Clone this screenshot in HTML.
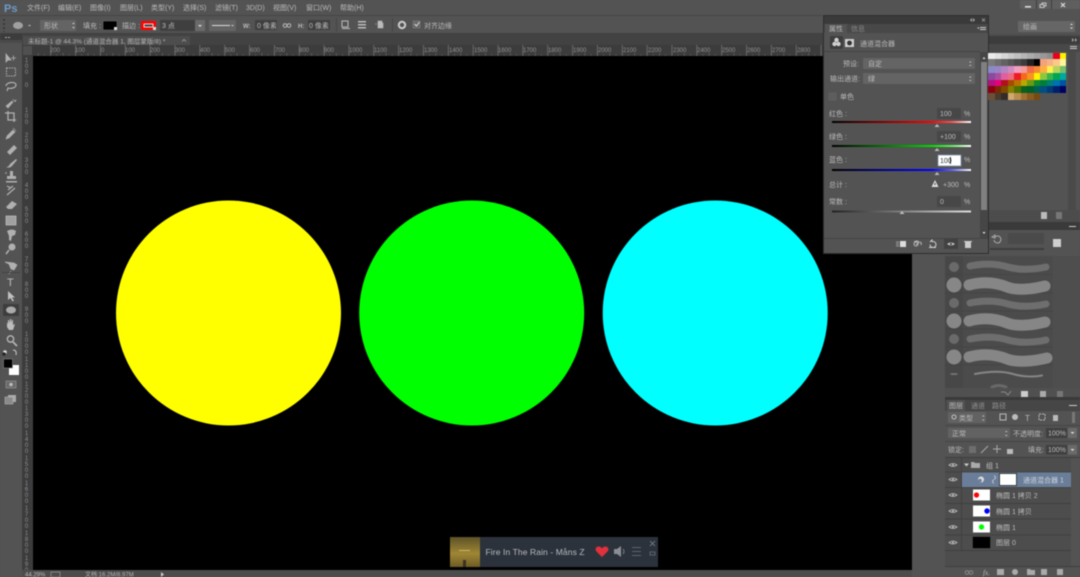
<!DOCTYPE html>
<html><head><meta charset="utf-8"><style>
html,body{margin:0;padding:0;width:1080px;height:577px;overflow:hidden;background:#535353}
#w{position:absolute;left:0;top:0;width:1080px;height:577px;overflow:hidden;filter:blur(.5px);font-family:"Liberation Sans","Noto Sans CJK SC",sans-serif}
svg{position:absolute;left:0;top:0}
text{font-family:"Liberation Sans","Noto Sans CJK SC",sans-serif;font-size:7px;fill:#bcbcbc}
.r text,text.r{font-size:6px;fill:#929292}
.v{position:absolute;left:24px;width:5px;word-break:break-all;line-height:6px;font-size:6px;color:#8a8f99;text-align:center}
#vr{position:absolute;left:22px;top:56px;width:11px;height:514px;background:#3c3c3c;overflow:hidden}
#vr .v{left:2px}
#sw{position:absolute;left:988px;top:52.500px;width:80px;display:grid;grid-template-columns:repeat(12,6.5px);grid-auto-rows:6.8px}
#sw i{display:block}
</style></head><body><div id="w">
<svg width="1080" height="577" viewBox="0 0 1080 577">
<defs>
<pattern id="ht" x="100" y="45" width="24.85" height="11" patternUnits="userSpaceOnUse">
<rect x="0" y="0" width=".8" height="11" fill="#747474"/>
<rect x="6.2" y="9" width=".7" height="2" fill="#5c5c5c"/><rect x="12.4" y="8" width=".7" height="3" fill="#666"/><rect x="18.6" y="9" width=".7" height="2" fill="#5c5c5c"/>
</pattern>
<linearGradient id="gr" x1="0" x2="1"><stop offset="0" stop-color="#000"/><stop offset=".72" stop-color="#f00"/><stop offset=".86" stop-color="#ff5050"/><stop offset="1" stop-color="#fff"/></linearGradient>
<linearGradient id="gg" x1="0" x2="1"><stop offset="0" stop-color="#000"/><stop offset=".72" stop-color="#0d0"/><stop offset=".86" stop-color="#60f060"/><stop offset="1" stop-color="#fff"/></linearGradient>
<linearGradient id="gb" x1="0" x2="1"><stop offset="0" stop-color="#000"/><stop offset=".72" stop-color="#00f"/><stop offset=".86" stop-color="#6060ff"/><stop offset="1" stop-color="#fff"/></linearGradient>
<linearGradient id="gs" x1="0" x2="1"><stop offset="0" stop-color="#222"/><stop offset="1" stop-color="#ddd"/></linearGradient>
<linearGradient id="al" x1="0" x2="0" y1="0" y2="1"><stop offset="0" stop-color="#5d5228"/><stop offset=".55" stop-color="#a08634"/><stop offset="1" stop-color="#6d5c26"/></linearGradient>
</defs>
<!-- base -->
<rect width="1080" height="577" fill="#535353"/>
<rect y="15" width="822" height="1" fill="#464646"/>
<rect y="33" width="824" height="1" fill="#404040"/>
<rect y="34" width="1080" height="11" fill="#424242"/>
<!-- menu -->
<text x="27" y="10">文件(F)</text><text x="58" y="10">编辑(E)</text><text x="90" y="10">图像(I)</text><text x="120" y="10">图层(L)</text><text x="151" y="10">类型(Y)</text><text x="183" y="10">选择(S)</text><text x="215" y="10">滤镜(T)</text><text x="246" y="10">3D(D)</text><text x="273" y="10">视图(V)</text><text x="306" y="10">窗口(W)</text><text x="340" y="10">帮助(H)</text>
<text x="4" y="12" style="font-size:11px;font-weight:bold;fill:#6d9cc8">Ps</text>
<!-- options -->
<g fill="#3a3a3a"><rect x="3" y="19" width="2" height="2"/><rect x="3" y="23" width="2" height="2"/><rect x="3" y="27" width="2" height="2"/><rect x="3" y="31" width="2" height="1"/></g>
<ellipse cx="18" cy="25.5" rx="5" ry="3.6" fill="#a0a0a0"/><path d="M28 25h3l-1.500 1.500z" fill="#c0c0c0"/>
<rect x="40" y="20" width="36" height="11" rx="1" fill="#646464"/><text x="44" y="28">形状</text><path d="M72 24l1.500-1.500 1.500 1.500zM72 27l1.500 1.500 1.500-1.500z" fill="#ccc"/>
<text x="83" y="28">填充 :</text>
<rect x="103" y="21" width="14" height="9" fill="#000" stroke="#777" stroke-width=".5"/><rect x="114" y="27" width="3" height="3" fill="#ddd"/>
<text x="122" y="28">描边 :</text>
<rect x="141" y="21" width="15" height="9" fill="#f00"/><rect x="144" y="24" width="9" height="3" fill="#444" stroke="#fff" stroke-width=".8"/><rect x="153" y="27" width="3" height="3" fill="#ddd"/>
<rect x="160" y="20" width="35" height="11" fill="#3f3f3f"/><text x="162" y="28">3 点</text>
<rect x="195" y="20" width="10" height="11" fill="#6a6a6a"/><path d="M198 25h4l-2 2z" fill="#ddd"/>
<rect x="209" y="20" width="27" height="11" rx="1" fill="#646464"/><rect x="212" y="25" width="18" height="1" fill="#ddd"/><path d="M231 25h3l-1.500 1.500z" fill="#ccc"/>
<text x="243" y="28" style="font-size:6px;font-weight:bold">W:</text><rect x="255" y="20" width="22" height="10" fill="#3f3f3f"/><text x="257" y="28">0 像素</text>
<g fill="none" stroke="#bbb" stroke-width="1"><circle cx="285" cy="25.500" r="1.800"/><circle cx="289" cy="25.500" r="1.800"/></g>
<text x="298" y="28" style="font-size:6px;font-weight:bold">H:</text><rect x="308" y="20" width="22" height="10" fill="#3f3f3f"/><text x="309" y="28">0 像素</text>
<rect x="336" y="18" width="1" height="14" fill="#464646"/>
<rect x="342" y="21" width="6" height="6" fill="none" stroke="#bbb"/><rect x="342" y="28" width="8" height="1" fill="#bbb"/>
<g fill="#bbb"><rect x="358" y="21" width="8" height="1.500"/><rect x="358" y="24" width="8" height="1.500"/><rect x="358" y="27" width="8" height="1.500"/></g>
<path d="M375 24h2M378 21h4v2h1v5h-5z" fill="#bbb" stroke="#bbb" stroke-width=".6"/>
<rect x="392" y="18" width="1" height="14" fill="#464646"/>
<circle cx="402" cy="25" r="3.200" fill="none" stroke="#ccc" stroke-width="2"/>
<rect x="413" y="21" width="7" height="7" fill="#666" stroke="#888" stroke-width=".5"/><path d="M414.500 24l2 2 3-4" fill="none" stroke="#ddd"/>
<text x="424" y="28">对齐边缘</text>
<!-- window buttons -->
<path d="M1020 0h60v9h-58q-2 0-2-2z" fill="#5f5f5f"/><rect x="1036" y="0" width="1" height="9" fill="#3e3e3e"/><rect x="1051" y="0" width="1" height="9" fill="#3e3e3e"/>
<rect x="1025" y="6" width="6" height="1.600" fill="#ddd"/><rect x="1042" y="3" width="4" height="3" fill="none" stroke="#ddd" stroke-width=".8"/><rect x="1040" y="4.500" width="4" height="3" fill="#666" stroke="#ddd" stroke-width=".8"/>
<path d="M1061 3l4 4M1065 3l-4 4" stroke="#ddd" stroke-width="1.200"/>
<!-- tab bar and ruler -->
<path d="M23 36h167v9h-167z" fill="#4d4d4d"/>
<text x="28" y="43.500" style="font-size:6.500px;fill:#b4b4b4">未标题-1 @ 44.3% (通道混合器 1, 图层蒙版/8) *</text><path d="M182 41.500l2-2 2 2" fill="none" stroke="#aaa" stroke-width=".7"/>
<rect x="0" y="34" width="22" height="6" fill="#3c3c3c"/><path d="M5 37.500h2M8 37.500h2" stroke="#aaa" stroke-width="1"/>
<rect x="22" y="45" width="890" height="11" fill="#3c3c3c"/>
<rect x="33" y="45" width="879" height="11" fill="url(#ht)"/>
<rect x="23" y="46" width="9" height="9" fill="#505050"/>
<g class="r">
<text x="50" y="52">200</text><text x="75" y="52">100</text><text x="101" y="52">0</text><text x="125" y="52">100</text><text x="150" y="52">200</text><text x="175" y="52">300</text><text x="200" y="52">400</text><text x="225" y="52">500</text><text x="250" y="52">600</text><text x="275" y="52">700</text><text x="299" y="52">800</text><text x="324" y="52">900</text><text x="349" y="52">1000</text><text x="374" y="52">1100</text><text x="399" y="52">1200</text><text x="424" y="52">1300</text><text x="449" y="52">1400</text><text x="474" y="52">1500</text><text x="498" y="52">1600</text><text x="523" y="52">1700</text><text x="548" y="52">1800</text><text x="573" y="52">1900</text><text x="598" y="52">2000</text><text x="623" y="52">2100</text><text x="648" y="52">2200</text><text x="673" y="52">2300</text><text x="697" y="52">2400</text><text x="722" y="52">2500</text><text x="747" y="52">2600</text><text x="772" y="52">2700</text><text x="797" y="52">2800</text>
</g>
<!-- canvas -->
<rect x="33" y="56" width="879" height="514" fill="#000"/>
<circle cx="228.500" cy="313" r="112.500" fill="#ff0"/>
<circle cx="471.700" cy="313" r="112.500" fill="#0f0"/>
<circle cx="715.200" cy="313" r="112.500" fill="#0ff"/>
<!-- toolbox -->
<rect x="0" y="40" width="22" height="537" fill="#535353"/>
<rect x="0" y="40" width="22" height="3" fill="#4a4a4a"/>
<g fill="#b0b0b0" stroke="none">
<path d="M6 54v8l2-2 3 0zM11 58h5M13.500 55.500v5" stroke="#b0b0b0" stroke-width=".8"/>
<rect x="6.500" y="68" width="9" height="8" fill="none" stroke="#b0b0b0" stroke-dasharray="1.500 1"/>
<path d="M6 86c0-4 10-5 10-1 0 3-6 4-8 3l-1 3" fill="none" stroke="#b0b0b0" stroke-width="1.200"/>
<path d="M6 106l6-5 1 1-5 6zM13 99l1 2 2-1-1 2" stroke="#b0b0b0" stroke-width=".6"/>
<path d="M8 111v9h8M5 113h9v9" fill="none" stroke="#b0b0b0" stroke-width="1.300"/>
<path d="M7 136l6-6 2 2-6 6-3 1zM13 128l3 3" stroke="#b0b0b0" stroke-width=".6"/>
<path d="M7 152l7-7 3 3-7 7z"/>
<path d="M6 167c2 0 3-1 4-3l6-5 1 1-5 6c-2 2-4 2-6 1z"/>
<path d="M10 171h3v5h3v3H7v-3h3zM6 181h11v1.500H6z"/><path d="M5 173h2M6 172v2" stroke="#b0b0b0" stroke-width=".6"/>
<path d="M7 195l8-7M8 190l5-4M7 186l4 2" stroke="#b0b0b0" stroke-width="1.200" fill="none"/>
<path d="M6 207l6-6 5 3-5 5h-4z"/>
<rect x="6" y="216" width="10" height="9" fill="#a0a0a0" stroke="#c0c0c0" stroke-width=".7"/>
<path d="M7 231q5-3 9 0l-1 4-3 1-1 5-2-1 0-4z"/>
<circle cx="12" cy="247" r="3.500"/><path d="M9 250l-3 4" stroke="#b0b0b0" stroke-width="1.500"/>
<path d="M5 262l9 1 3 2-3 5-3-1-2-5zM11 271l-2 3" stroke="#b0b0b0" stroke-width=".7"/>
<rect x="2" y="272" width="18" height="1" fill="#444"/>
</g>
<text x="7" y="286" style="font-size:11px;fill:#bcbcbc">T</text>
<path d="M8 291v9l2.500-2 2 3.500 1.500-1-2-3h3z" fill="#c0c0c0"/>
<rect x="3" y="304" width="16" height="12" rx="1" fill="#3d3d3d"/><ellipse cx="11" cy="310" rx="5" ry="3.500" fill="#aaa"/>
<path d="M7 327v-5l1 2v-4h1l1 3v-4h1l1 4v-3h1v5l2-1-2 6H9z" fill="#bcbcbc"/>
<circle cx="10.500" cy="339" r="3.200" fill="none" stroke="#b8b8b8" stroke-width="1.300"/><path d="M13 342l4 4" stroke="#b8b8b8" stroke-width="1.600"/>
<circle cx="5" cy="352" r="1.800" fill="#ddd"/><rect x="2.500" y="352.500" width="3" height="3" fill="#222"/><path d="M13 350q4 0 3 5" fill="none" stroke="#ccc"/>
<rect x="9" y="365" width="10" height="10" fill="#fff"/>
<rect x="3.500" y="359" width="9" height="9" fill="#000" stroke="#888" stroke-width=".6"/>
<rect x="6" y="381" width="10" height="7" fill="#6a6a6a" stroke="#999" stroke-width=".6"/><circle cx="11" cy="384.500" r="1.800" fill="#bbb"/>
<rect x="8" y="395" width="8" height="7" fill="#aaa"/><rect x="5" y="397" width="8" height="7" fill="#8a8a8a" stroke="#bbb" stroke-width=".5"/>
<!-- status bar -->
<rect x="22" y="570" width="890" height="7" fill="#4c4c4c"/>
<text x="25" y="576.500" style="font-size:6px">44.29%</text><rect x="51" y="572" width="9" height="5" fill="none" stroke="#999" stroke-width=".7"/>
<text x="85" y="576.500" style="font-size:6px;fill:#b4b4b4">文档:16.2M/8.97M</text><path d="M161 572l3 2.500-3 2.500z" fill="#ccc"/>
<!-- right background -->
<rect x="912" y="16" width="168" height="561" fill="#4c4c4c"/>
<rect x="912" y="16" width="168" height="18" fill="#535353"/>
<rect x="1018" y="21" width="57" height="11" rx="1" fill="#666"/><text x="1023" y="29">绘画</text><path d="M1070 25l1.500-1.500 1.500 1.500zM1070 27.500l1.500 1.500 1.500-1.500z" fill="#ddd"/>
<rect x="912" y="34" width="33" height="543" fill="#535353"/>
<rect x="988" y="36" width="92" height="8" fill="#3c3c3c"/><rect x="988" y="44" width="92" height="8" fill="#484848"/>
<path d="M1072 38l2 2-2 2zM1075 38l2 2-2 2z" fill="#aaa"/><rect x="1070" y="46" width="7" height="1" fill="#ccc"/><rect x="1070" y="48" width="7" height="1" fill="#ccc"/>
<rect x="988" y="52" width="92" height="158" fill="#535353"/>
<rect x="1068" y="52" width="8" height="158" fill="#4a4a4a"/>
<rect x="988" y="210" width="92" height="12" fill="#4c4c4c"/>
<rect x="1041" y="212" width="6" height="7" fill="#bbb"/><rect x="1056" y="212" width="6" height="7" fill="#777"/>
<rect x="945" y="222" width="135" height="8" fill="#3a3a3a"/><rect x="1069" y="226" width="7" height="1" fill="#ccc"/>
<rect x="945" y="230" width="135" height="27" fill="#535353"/>
<rect x="1008" y="233" width="36" height="11" fill="#4a4a4a"/><rect x="990" y="248" width="54" height="2" fill="#3e3e3e"/>
<rect x="1053" y="239" width="8" height="8" fill="#d0d0d0"/>
<path d="M995 237a3.500 3.500 0 1 1-1 3M992 237l3-2v3z" fill="none" stroke="#aaa"/>
<!-- brushes -->
<rect x="945" y="256" width="108" height="133" fill="#4b4b4b"/><rect x="945" y="256" width="18" height="133" fill="#474747"/>
<rect x="1053" y="256" width="27" height="133" fill="#4e4e4e"/>
<g stroke="#424242" stroke-width=".6"><path d="M945 274.500h108M945 293h108M945 311h108M945 329h108M945 347h108M945 365h108"/></g>
<g fill="#878787">
<circle cx="954" cy="267" r="5" opacity=".55"/><circle cx="954" cy="285" r="7.500"/><circle cx="954" cy="303" r="5" opacity=".55"/><circle cx="954" cy="321" r="7.500"/><circle cx="954" cy="339" r="5" opacity=".55"/><circle cx="954" cy="357" r="7.500"/><ellipse cx="954" cy="374" rx="4" ry="1" opacity=".7"/>
</g>
<g fill="none" stroke="#868686" stroke-linecap="round">
<path d="M970 266c15-3 28-2 38 1s24 3 38 0" stroke-width="7" opacity=".6"/>
<path d="M969 285c15-4 28-2 38 2s26 2 38-1" stroke-width="11"/>
<path d="M970 303c15-3 28-2 38 1s24 3 38 0" stroke-width="7" opacity=".6"/>
<path d="M969 321c15-4 28-2 38 2s26 2 38-1" stroke-width="11"/>
<path d="M970 339c15-3 28-2 38 1s24 3 38 0" stroke-width="7" opacity=".6"/>
<path d="M969 357c15-4 28-2 38 2s28 2 40-1" stroke-width="11"/>
<path d="M975 374c15-3 28-3 38 0s22 3 29 1.500" stroke-width="2"/>
<path d="M992 387c5-2 8-2 14 0" stroke-width="3" opacity=".5"/>
</g>
<rect x="945" y="388" width="135" height="9" fill="#505050"/>
<path d="M1005 392l3 3 3-4M1001 392h4" fill="none" stroke="#888"/><rect x="1021" y="391" width="7" height="6" fill="#ccc"/><rect x="1040" y="391" width="6" height="6" fill="#aaa"/><rect x="1057" y="391" width="6" height="6" fill="#777"/>
<!-- layers -->
<rect x="945" y="397" width="135" height="3" fill="#3a3a3a"/>
<rect x="945" y="400" width="135" height="11" fill="#464646"/><rect x="947" y="400" width="18" height="11" fill="#535353"/>
<text x="949" y="408">图层</text><text x="971" y="408" style="fill:#929292">通道</text><text x="992" y="408" style="fill:#929292">路径</text>
<rect x="1069" y="405" width="8" height="1" fill="#ccc"/>
<rect x="945" y="411" width="135" height="166" fill="#535353"/>
<rect x="948" y="412" width="38" height="11" rx="1" fill="#626262"/><circle cx="954" cy="417" r="2" fill="none" stroke="#ddd" stroke-width=".8"/><text x="959" y="420.500">类型</text><path d="M982 416.500l1.300-1.300 1.300 1.300zM982 419.500l1.300 1.300 1.300-1.300z" fill="#ccc"/>
<rect x="1000" y="414" width="6" height="6" fill="none" stroke="#bbb"/><circle cx="1015" cy="417" r="3" fill="#bbb"/><text x="1025" y="421" style="font-size:8px">T</text><rect x="1039" y="414" width="6" height="6" fill="none" stroke="#bbb" stroke-dasharray="2 1"/><rect x="1053" y="415" width="5" height="6" fill="#bbb"/>
<rect x="1072" y="412" width="3" height="11" fill="#777"/>
<rect x="945" y="425" width="135" height="1" fill="#464646"/>
<rect x="948" y="428" width="62" height="10" rx="1" fill="#626262"/><text x="952" y="436">正常</text><path d="M1005 432l1.300-1.300 1.300 1.300zM1005 435l1.300 1.300 1.300-1.300z" fill="#ccc"/>
<text x="1013" y="436">不透明度:</text><rect x="1046" y="428" width="21" height="10" fill="#3f3f3f"/><text x="1048" y="435.500">100%</text><rect x="1068" y="428" width="9" height="10" fill="#6a6a6a"/><path d="M1070.500 432h4l-2 2z" fill="#ddd"/>
<rect x="945" y="441" width="135" height="1" fill="#464646"/>
<text x="948" y="452">锁定:</text><rect x="969" y="446" width="7" height="7" fill="#6e6e6e"/><path d="M981 453l7-7" stroke="#aaa"/><path d="M997 445v8M993 449h8" stroke="#aaa"/><rect x="1007" y="449" width="6" height="5" fill="#bbb"/>
<text x="1028" y="452">填充:</text><rect x="1046" y="445" width="21" height="9.500" fill="#3f3f3f"/><text x="1048" y="452">100%</text><rect x="1068" y="445" width="9" height="9.500" fill="#6a6a6a"/><path d="M1070.500 449h4l-2 2z" fill="#ddd"/>
<rect x="945" y="457" width="135" height="1" fill="#3e3e3e"/>
<rect x="945" y="458" width="126" height="108" fill="#4d4d4d"/>
<rect x="1071" y="458" width="9" height="108" fill="#535353"/>
<rect x="962" y="472" width="109" height="15.500" fill="#6a7e99"/>
<g stroke="#3d3d3d" stroke-width=".7"><path d="M945 472h126M945 487.500h126M945 503.500h126M945 519h126M945 535h126M945 550.500h126M961.500 458v93"/></g>
<g fill="none" stroke="#bdbdbd" stroke-width=".8">
<path d="M949 465q4-3 8 0q-4 3-8 0zM949 479.500q4-3 8 0q-4 3-8 0zM949 495q4-3 8 0q-4 3-8 0zM949 511q4-3 8 0q-4 3-8 0zM949 527q4-3 8 0q-4 3-8 0zM949 542.500q4-3 8 0q-4 3-8 0z"/>
</g>
<g fill="#bdbdbd"><circle cx="953" cy="465" r="1"/><circle cx="953" cy="479.500" r="1"/><circle cx="953" cy="495" r="1"/><circle cx="953" cy="511" r="1"/><circle cx="953" cy="527" r="1"/><circle cx="953" cy="542.500" r="1"/></g>
<path d="M964 463.500h5l-2.500 3z" fill="#ccc"/><path d="M971 462h3l1 1h5v5h-9z" fill="#aaa"/><text x="986" y="468" style="fill:#c0c0c0">组 1</text>
<circle cx="981" cy="479.500" r="3" fill="#ddd"/><circle cx="980" cy="480.500" r="1.800" fill="#6a7e99"/>
<path d="M994 476a1.500 1.500 0 0 1 0 3M994 480a1.500 1.500 0 0 0 0 3" fill="none" stroke="#d8d8d8" stroke-width=".7"/>
<rect x="999.500" y="473.500" width="17" height="12" fill="#fff" stroke="#222" stroke-width=".8"/>
<text x="1023" y="482.500" style="fill:#d0d4dc">通道混合器 1</text>
<rect x="973" y="489.500" width="17" height="11" fill="#fff"/><circle cx="976.500" cy="495" r="2.600" fill="#f00"/>
<text x="996" y="498">椭圆 1 拷贝 2</text>
<rect x="973" y="505.500" width="17" height="11" fill="#fff"/><circle cx="987" cy="511" r="2.700" fill="#00f"/>
<text x="996" y="514">椭圆 1 拷贝</text>
<rect x="973" y="521.500" width="17" height="11" fill="#fff"/><circle cx="981.500" cy="527" r="2.700" fill="#0f0"/>
<text x="996" y="530">椭圆 1</text>
<rect x="972.500" y="536.500" width="18" height="12" fill="#000" stroke="#555" stroke-width=".5"/>
<text x="996" y="545">图层 0</text>
<rect x="945" y="566" width="135" height="1" fill="#3e3e3e"/>
<g fill="#aaa"><circle cx="967" cy="572.500" r="1.800" fill="none" stroke="#888"/><circle cx="971" cy="572.500" r="1.800" fill="none" stroke="#888"/>
<text x="983" y="575" style="font-size:7px;font-style:italic;font-family:'Liberation Serif',serif">fx.</text>
<rect x="997" y="569" width="7" height="6"/><circle cx="1015" cy="572" r="3"/><path d="M1027 569h3l1 1h4v5h-8z"/><rect x="1041" y="569" width="6" height="6"/><rect x="1057" y="569" width="6" height="6"/></g>
<!-- properties panel -->
<rect x="823.500" y="15.500" width="165" height="238" fill="#535353" stroke="#2e2e2e"/>
<rect x="824" y="16" width="164" height="8" fill="#3a3a3a"/>
<path d="M972 18l-2 2 2 2zM973 18l2 2-2 2z" fill="#aaa"/><path d="M982 18.500l3 3M985 18.500l-3 3" stroke="#aaa" stroke-width=".7"/>
<rect x="824" y="24" width="164" height="9" fill="#484848"/><rect x="825" y="24" width="22" height="9" fill="#535353"/>
<text x="829" y="31">属性</text><text x="851" y="31" style="fill:#8a8a8a">信息</text>
<rect x="980" y="27" width="6" height="1" fill="#ccc"/><rect x="980" y="29" width="6" height="1" fill="#ccc"/><path d="M977 28l2-1v2z" fill="#ccc"/>
<rect x="830" y="36" width="13" height="13" rx="2" fill="#3d3d3d"/>
<circle cx="836.500" cy="40" r="2.200" fill="#d0d0d0"/><circle cx="834.500" cy="44" r="2.200" fill="#d0d0d0"/><circle cx="838.500" cy="44" r="2.200" fill="#d0d0d0"/>
<rect x="845" y="39" width="9" height="8" fill="#d0d0d0"/><circle cx="849.500" cy="43" r="2.400" fill="#333"/>
<text x="860" y="46">通道混合器</text>
<rect x="824" y="51" width="156" height="1" fill="#434343"/>
<text x="843" y="66" style="font-size:7px">预设:</text><rect x="863" y="58" width="112" height="11" rx="1" fill="#646464"/><text x="868" y="66">自定</text><path d="M969 62.500l1.300-1.300 1.300 1.300zM969 65l1.300 1.300 1.300-1.300z" fill="#ccc"/>
<text x="830" y="81" style="font-size:7px">输出通道:</text><rect x="863" y="73" width="112" height="11" rx="1" fill="#646464"/><text x="868" y="81">绿</text><path d="M969 77.500l1.300-1.300 1.300 1.300zM969 80l1.300 1.300 1.300-1.300z" fill="#ccc"/>
<rect x="829" y="93" width="7" height="7" fill="#5d5d5d" stroke="#6a6a6a" stroke-width=".5"/><text x="840" y="99">单色</text>
<text x="829" y="116">红色 :</text><rect x="937" y="108" width="24" height="11" fill="#474747"/><text x="940" y="116">100</text><text x="964" y="116">%</text>
<rect x="832" y="121" width="139" height="2" fill="url(#gr)"/><path d="M937 124l2.500 3h-5z" fill="#bbb"/>
<text x="829" y="139">绿色 :</text><rect x="937" y="131" width="24" height="11" fill="#474747"/><text x="940" y="139">+100</text><text x="964" y="139">%</text>
<rect x="832" y="145" width="139" height="2" fill="url(#gg)"/><path d="M937 148l2.500 3h-5z" fill="#bbb"/>
<text x="829" y="162">蓝色 :</text><rect x="938" y="155" width="23" height="11" fill="#fff" stroke="#7a8fb0" stroke-width=".8"/><text x="940" y="163" style="fill:#333">100</text><rect x="950" y="157" width=".8" height="7" fill="#000"/><text x="964" y="162">%</text>
<rect x="832" y="169" width="139" height="2" fill="url(#gb)"/><path d="M937 172l2.500 3h-5z" fill="#bbb"/>
<text x="829" y="187">总计 :</text><path d="M935 180l-3.500 7h7z" fill="#ddd"/><rect x="934.500" y="183" width="1" height="2" fill="#444"/><text x="943" y="187">+300</text><text x="964" y="187">%</text>
<text x="829" y="204">常数 :</text><rect x="937" y="196" width="24" height="11" fill="#474747"/><text x="940" y="204">0</text><text x="964" y="204">%</text>
<rect x="832" y="210.500" width="139" height="2" fill="url(#gs)"/><path d="M902 211l2.500 3h-5z" fill="#bbb"/>
<rect x="980" y="52" width="8" height="186" fill="#464646"/><rect x="981" y="62" width="6" height="148" fill="#808080"/><path d="M982.500 59l1.500-2 1.500 2z" fill="#ddd"/><path d="M982.500 232l1.500 2 1.500-2z" fill="#ddd"/>
<rect x="824" y="238" width="164" height="1" fill="#434343"/>
<rect x="944" y="238" width="14" height="11" fill="#424242"/>
<rect x="900" y="241" width="6" height="6" fill="#ddd"/><path d="M896 242h3M896 244h3M896 246h3" stroke="#bbb" stroke-width=".7"/>
<path d="M914 242q3-2 5 0q-1 3-3 2M920 242q2 1 1 3" fill="none" stroke="#bbb"/><circle cx="916" cy="244" r="2" fill="none" stroke="#bbb"/>
<path d="M930 242l2-2v1.500h1a3 3 0 1 1-3 3" fill="none" stroke="#ccc"/><rect x="929" y="247" width="7" height="1" fill="#ccc"/>
<path d="M947 244q4-3 8 0q-4 3-8 0z" fill="#ccc"/><circle cx="951" cy="244" r="1" fill="#333"/>
<rect x="965" y="242" width="6" height="6" fill="#ccc"/><rect x="964" y="241" width="8" height="1" fill="#ccc"/>
<!-- music -->
<rect x="450" y="537" width="208" height="30" fill="#2c323b"/>
<rect x="450" y="537" width="30" height="30" fill="url(#al)"/>
<rect x="463" y="560" width="3" height="7" fill="#3a3220"/><rect x="459" y="550" width="11" height="1" fill="#c8b870"/>
<text x="485.500" y="555" style="font-size:8.500px;fill:#b8bcc2;letter-spacing:.1px">Fire In The Rain - Måns Z</text>
<rect x="586" y="540" width="6" height="24" fill="#2c323b"/>
<path d="M602 557l-5.500-5.500c-2-2-.5-5 2-5 1.500 0 2.700.8 3.500 2 .8-1.200 2-2 3.500-2 2.500 0 4 3 2 5z" fill="#e0313c"/>
<path d="M614 549h3l4-3v11l-4-3h-3z" fill="#8a8f95"/><path d="M623 549q2 2.500 0 5" fill="none" stroke="#7a7f85"/>
<g fill="#5d636b"><rect x="632" y="547" width="9" height="1"/><rect x="632" y="551" width="9" height="1"/><rect x="632" y="555" width="9" height="1"/></g>
<path d="M650 541l5 5M655 541l-5 5" stroke="#7e848c" stroke-width=".8"/><rect x="650" y="552" width="5" height="3" fill="none" stroke="#6f757d" stroke-width=".7"/>
</svg>
<div id="vr">
<div class="v" style="top:2px">100</div><div class="v" style="top:27px">0</div><div class="v" style="top:52px">100</div><div class="v" style="top:77px">200</div><div class="v" style="top:102px">300</div><div class="v" style="top:127px">400</div><div class="v" style="top:151px">500</div><div class="v" style="top:176px">600</div><div class="v" style="top:201px">700</div><div class="v" style="top:226px">800</div><div class="v" style="top:251px">900</div><div class="v" style="top:276px">1000</div><div class="v" style="top:301px">1100</div><div class="v" style="top:326px">1200</div><div class="v" style="top:350px">1300</div><div class="v" style="top:375px">1400</div><div class="v" style="top:400px">1500</div><div class="v" style="top:425px">1600</div><div class="v" style="top:450px">1700</div><div class="v" style="top:475px">1800</div><div class="v" style="top:500px">1900</div>
</div>
<div id="sw">
<i style="background:#ececec"></i><i style="background:#e2e2e2"></i><i style="background:#d6d6d6"></i><i style="background:#cbcbcb"></i><i style="background:#c0c0c0"></i><i style="background:#b6b6b6"></i><i style="background:#acacac"></i><i style="background:#a2a2a2"></i><i style="background:#989898"></i><i style="background:#8e8e8e"></i><i style="background:#e8001c"></i><i style="background:#fff200"></i>
<i style="background:#7a7a7a"></i><i style="background:#6e6e6e"></i><i style="background:#626262"></i><i style="background:#565656"></i><i style="background:#4a4a4a"></i><i style="background:#3c3c3c"></i><i style="background:#222"></i><i style="background:#000"></i><i style="background:#f3a27d"></i><i style="background:#f6b184"></i><i style="background:#fcc98a"></i><i style="background:#fff59b"></i>
<i style="background:#8a8ac6"></i><i style="background:#9a84c4"></i><i style="background:#b286c2"></i><i style="background:#d08cc0"></i><i style="background:#f29cc0"></i><i style="background:#f49a9a"></i><i style="background:#ef6c45"></i><i style="background:#f58a35"></i><i style="background:#fbb040"></i><i style="background:#fff04f"></i><i style="background:#b5d45a"></i><i style="background:#74bf6c"></i>
<i style="background:#8a4a9e"></i><i style="background:#a850a0"></i><i style="background:#e0609f"></i><i style="background:#ee6a80"></i><i style="background:#ee1c25"></i><i style="background:#f26a1c"></i><i style="background:#f7941d"></i><i style="background:#fff200"></i><i style="background:#8dc63f"></i><i style="background:#39b54a"></i><i style="background:#00a651"></i><i style="background:#00a99d"></i>
<i style="background:#b0127f"></i><i style="background:#e6007e"></i><i style="background:#b0121b"></i><i style="background:#a84a00"></i><i style="background:#b87400"></i><i style="background:#b8a800"></i><i style="background:#6a9a10"></i><i style="background:#0f8a30"></i><i style="background:#007f3a"></i><i style="background:#007f72"></i><i style="background:#0072b0"></i><i style="background:#0054a0"></i>
<i style="background:#8a0010"></i><i style="background:#7a2a00"></i><i style="background:#7d4a00"></i><i style="background:#858000"></i><i style="background:#4d7000"></i><i style="background:#0a601e"></i><i style="background:#005e26"></i><i style="background:#005e58"></i><i style="background:#004f7f"></i><i style="background:#003a78"></i><i style="background:#00206a"></i><i style="background:#000060"></i>
<i style="background:#6a5038"></i><i style="background:#4a3a2c"></i><i style="background:#322c28"></i><i style="background:#d0a870"></i><i style="background:#b88d50"></i><i style="background:#a07030"></i><i style="background:#8a5a20"></i><i style="background:#784a10"></i><i style="background:#535353"></i><i style="background:#535353"></i><i style="background:#535353"></i><i style="background:#535353"></i>
</div>
</div></body></html>
